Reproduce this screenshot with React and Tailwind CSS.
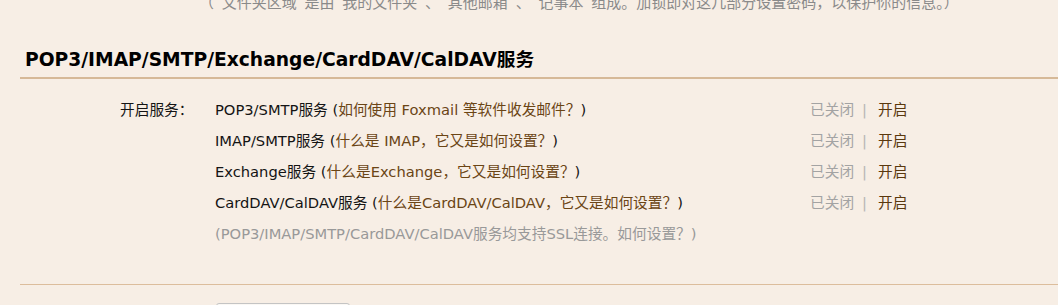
export default function App() {
  const rows = [
    { name: "POP3/SMTP服务", help: "如何使用 Foxmail 等软件收发邮件？" },
    { name: "IMAP/SMTP服务", help: "什么是 IMAP，它又是如何设置？" },
    { name: "Exchange服务", help: "什么是Exchange，它又是如何设置？" },
    { name: "CardDAV/CalDAV服务", help: "什么是CardDAV/CalDAV，它又是如何设置？" },
  ];

  return (
    <div
      className="w-[1058px] h-[305px] overflow-hidden bg-[#f7eee5] text-[14.7px] text-[#141414]"
      style={{ fontFamily: '"DejaVu Sans", Verdana, "Noto Sans CJK SC", sans-serif' }}
    >
      {/* tail of the previous section */}
      <p className="-mt-[7px] h-[20px] leading-[20px] pl-[199px] text-[15px] text-[#8a8a8a] whitespace-nowrap">
        （“文件夹区域”是由“我的文件夹”、“其他邮箱”、“记事本”组成。加锁即对这几部分设置密码，以保护你的信息。）
      </p>

      <div className="pl-[20px] mt-[34px]">
        <h2 className="h-[32px] leading-[26px] pl-[5px] text-[18.7px] font-bold text-black border-b-2 border-[#d6b998]">
          POP3/IMAP/SMTP/Exchange/CardDAV/CalDAV服务
        </h2>

        <div className="pt-[15px] pb-[35px] border-b border-[#dcbd9c]">
          {rows.map((r, i) => (
            <div key={r.name} className="flex h-[31px] leading-[31px]">
              <div className="w-[175px] pl-[100px] whitespace-nowrap">{i === 0 ? "开启服务：" : ""}</div>
              <div className="w-[615px] pl-[20px] whitespace-nowrap">
                {r.name} (<a href="#/" className="text-[#6b4515]">{r.help}</a>)
              </div>
              <div className="flex whitespace-nowrap">
                <span className="text-[#a3a3a3]">已关闭</span>
                <span className="text-[#b5b5b5] pl-[8px] pr-[11px]">|</span>
                <a href="#/" className="text-[#5a380e]">开启</a>
              </div>
            </div>
          ))}
          <div className="flex h-[31px] leading-[31px]">
            <div className="w-[175px]" />
            <div className="pl-[20px] whitespace-nowrap text-[#999]">
              (POP3/IMAP/SMTP/CardDAV/CalDAV服务均支持SSL连接。<a href="#/" className="text-[#999]">如何设置？</a>)
            </div>
          </div>
        </div>

        <div className="pt-[18px] pl-[196px]">
          <button className="w-[134px] h-[28px] rounded-[3px] border border-[#c4c4c4] bg-[#fbf8f4] text-[13px]">
            保存更改
          </button>
        </div>
      </div>
    </div>
  );
}
